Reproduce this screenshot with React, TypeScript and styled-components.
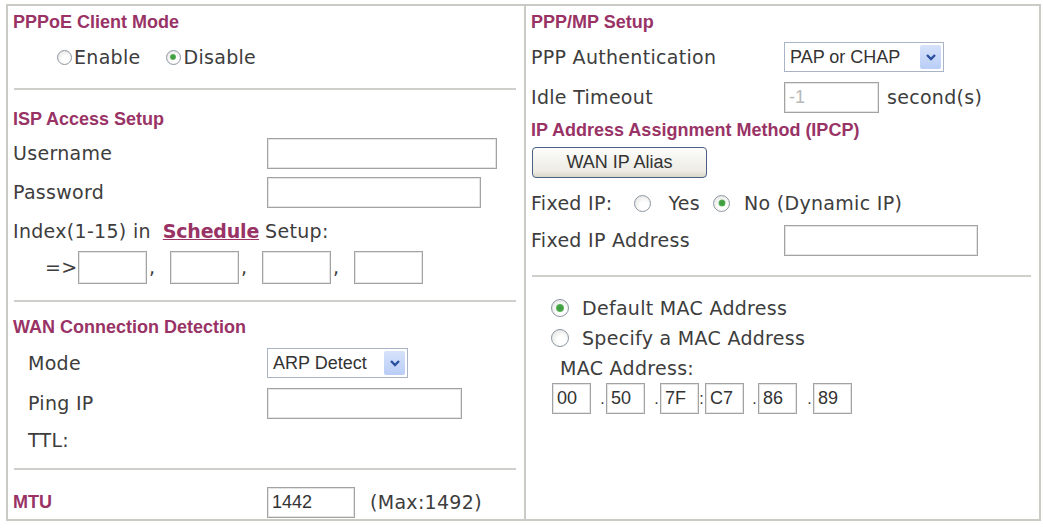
import styled, { createGlobalStyle } from "styled-components";

const GlobalStyle = createGlobalStyle`
  body {
    margin: 0;
    background: #fff;
    font-family: "DejaVu Sans", Verdana, sans-serif;
    font-size: 19px;
    letter-spacing: 0.3px;
    color: #3d3d3d;
  }
  * { box-sizing: border-box; }
`;

const Panel = styled.div`
  display: flex;
  margin: 4px 0 0 6px;
  width: 1035px;
  height: 517px;
  border: 2px solid #cbcbc5;
`;

const Column = styled.div<{ $w: number; $divider?: boolean }>`
  width: ${(p) => p.$w}px;
  display: flex;
  flex-direction: column;
  padding: 0 6px 0 5px;
  border-right: ${(p) => (p.$divider ? "2px solid #cbcbc5" : "none")};
`;

const Section = styled.div<{ $top?: number; $bottom?: number }>`
  display: flex;
  flex-direction: column;
  padding-top: ${(p) => p.$top ?? 0}px;
  padding-bottom: ${(p) => p.$bottom ?? 0}px;
`;

const Divider = styled.div`
  height: 2px;
  margin: 0 2px 0 1px;
  background: #cfcfcb;
`;

const Row = styled.div<{ $h: number; $indent?: number }>`
  display: flex;
  align-items: center;
  height: ${(p) => p.$h}px;
  padding-left: ${(p) => p.$indent ?? 0}px;
  white-space: nowrap;
`;

const Title = styled.div`
  font-family: "Liberation Sans", Arial, sans-serif;
  font-weight: bold;
  font-size: 18px;
  letter-spacing: 0;
  color: #993366;
`;

const Label = styled.span<{ $w?: number; $indent?: number }>`
  display: inline-block;
  width: ${(p) => (p.$w ? `${p.$w}px` : "auto")};
  padding-left: ${(p) => p.$indent ?? 0}px;
  flex-shrink: 0;
`;

const Link = styled.a`
  font-weight: bold;
  letter-spacing: -0.2px;
  color: #993366;
  text-decoration: underline;
  margin: 0 6px 0 12px;
`;

const Input = styled.input<{ $w: number; $h?: number; $muted?: boolean }>`
  width: ${(p) => p.$w}px;
  height: ${(p) => p.$h ?? 31}px;
  border: 1px solid #a3a3a3;
  outline: 1px solid #e4e4e4;
  outline-offset: -2px;
  padding: 0 4px;
  font-family: "Liberation Sans", Arial, sans-serif;
  font-size: 18px;
  letter-spacing: 0;
  color: ${(p) => (p.$muted ? "#b8b8b8" : "#333")};
  background: #fff;
  flex-shrink: 0;
`;

const Select = styled.div<{ $w: number }>`
  display: flex;
  align-items: center;
  justify-content: space-between;
  width: ${(p) => p.$w}px;
  height: 30px;
  border: 1px solid #a8b4c4;
  padding: 0 2px 0 5px;
  font-family: "Liberation Sans", Arial, sans-serif;
  font-size: 18px;
  letter-spacing: 0;
  color: #333;
`;

const SelectArrow = styled.span`
  display: flex;
  align-items: center;
  justify-content: center;
  width: 21px;
  height: 24px;
  background: linear-gradient(#d6e2fb, #b9cdf6);
  border-radius: 2px;
`;

const Button = styled.button`
  width: 175px;
  height: 31px;
  border: 1px solid #4a6184;
  border-radius: 4px;
  background: linear-gradient(#fdfdfb, #ecebe4 80%, #d9d6cb);
  font-family: "Liberation Sans", Arial, sans-serif;
  font-size: 18px;
  color: #333;
  padding: 0;
`;

const RadioDot = styled.span<{ $size: number; $on?: boolean; $gap?: number }>`
  position: relative;
  display: inline-block;
  width: ${(p) => p.$size}px;
  height: ${(p) => p.$size}px;
  border-radius: 50%;
  border: 1.5px solid #8d97a3;
  background: radial-gradient(circle at 60% 65%, #ffffff 30%, #dcdcd8 100%);
  margin-left: ${(p) => p.$gap ?? 0}px;
  flex-shrink: 0;

  &::after {
    content: "";
    display: ${(p) => (p.$on ? "block" : "none")};
    position: absolute;
    left: 50%;
    top: 50%;
    width: ${(p) => Math.round(p.$size * 0.42)}px;
    height: ${(p) => Math.round(p.$size * 0.42)}px;
    transform: translate(-50%, -50%);
    border-radius: 50%;
    background: radial-gradient(circle, #3f9e3f 40%, #8fd08f 100%);
  }
`;

const Text = styled.span<{ $gap: number }>`
  margin-left: ${(p) => p.$gap}px;
`;

const Sep = styled.span<{ $w: number }>`
  display: inline-block;
  width: ${(p) => p.$w}px;
  text-align: right;
  padding-right: 1px;
  font-family: "Liberation Sans", Arial, sans-serif;
  font-size: 16px;
  color: #333;
`;

const Comma = styled.span`
  display: inline-block;
  width: 23px;
  padding-left: 2px;
`;

function Chevron() {
  return (
    <svg width="12" height="10" viewBox="0 0 12 10">
      <polyline points="2,3 6,7 10,3" fill="none" stroke="#2a4f9e" strokeWidth="2.4" />
    </svg>
  );
}

function Dropdown({ value, width }: { value: string; width: number }) {
  return (
    <Select $w={width}>
      <span>{value}</span>
      <SelectArrow>
        <Chevron />
      </SelectArrow>
    </Select>
  );
}

const macParts: { v: string; sep: string; w: number }[] = [
  { v: "00", sep: "", w: 0 },
  { v: "50", sep: ".", w: 15 },
  { v: "7F", sep: ".", w: 15 },
  { v: "C7", sep: ":", w: 6 },
  { v: "86", sep: ".", w: 14 },
  { v: "89", sep: ".", w: 16 },
];

export default function App() {
  return (
    <>
      <GlobalStyle />
      <Panel>
        <Column $w={518} $divider>
          <Section $bottom={12}>
            <Row $h={32}>
              <Title>PPPoE Client Mode</Title>
            </Row>
            <Row $h={38} $indent={44}>
              <RadioDot $size={15} />
              <Text $gap={2}>Enable</Text>
              <RadioDot $size={15} $on $gap={25} />
              <Text $gap={3}>Disable</Text>
            </Row>
          </Section>
          <Divider />
          <Section $top={14} $bottom={16}>
            <Row $h={30}>
              <Title>ISP Access Setup</Title>
            </Row>
            <Row $h={38}>
              <Label $w={254}>Username</Label>
              <Input $w={230} readOnly />
            </Row>
            <Row $h={40}>
              <Label $w={254}>Password</Label>
              <Input $w={214} readOnly />
            </Row>
            <Row $h={38}>
              <Label>
                Index(1-15) in<Link>Schedule</Link>Setup:
              </Label>
            </Row>
            <Row $h={34} $indent={32}>
              <Label $w={33}>=&gt;</Label>
              <Input $w={69} $h={33} readOnly />
              <Comma>,</Comma>
              <Input $w={69} $h={33} readOnly />
              <Comma>,</Comma>
              <Input $w={69} $h={33} readOnly />
              <Comma>,</Comma>
              <Input $w={69} $h={33} readOnly />
            </Row>
          </Section>
          <Divider />
          <Section $top={10} $bottom={10}>
            <Row $h={30}>
              <Title>WAN Connection Detection</Title>
            </Row>
            <Row $h={42}>
              <Label $w={254} $indent={15}>Mode</Label>
              <Dropdown value="ARP Detect" width={141} />
            </Row>
            <Row $h={38}>
              <Label $w={254} $indent={15}>Ping IP</Label>
              <Input $w={195} readOnly />
            </Row>
            <Row $h={36}>
              <Label $indent={15}>TTL:</Label>
            </Row>
          </Section>
          <Divider />
          <Section $top={16}>
            <Row $h={32}>
              <Label $w={254}>
                <Title>MTU</Title>
              </Label>
              <Input $w={88} defaultValue="1442" readOnly />
              <Text $gap={15}>(Max:1492)</Text>
            </Row>
          </Section>
        </Column>

        <Column $w={513}>
          <Section $bottom={19}>
            <Row $h={32}>
              <Title>PPP/MP Setup</Title>
            </Row>
            <Row $h={38}>
              <Label $w={253}>PPP Authentication</Label>
              <Dropdown value="PAP or CHAP" width={160} />
            </Row>
            <Row $h={42}>
              <Label $w={253}>Idle Timeout</Label>
              <Input $w={95} defaultValue="-1" $muted readOnly />
              <Text $gap={8}>second(s)</Text>
            </Row>
            <Row $h={24}>
              <Title>IP Address Assignment Method (IPCP)</Title>
            </Row>
            <Row $h={40} $indent={1}>
              <Button>WAN IP Alias</Button>
            </Row>
            <Row $h={42}>
              <Label>Fixed IP:</Label>
              <RadioDot $size={17} $gap={22} />
              <Text $gap={17}>Yes</Text>
              <RadioDot $size={17} $on $gap={13} />
              <Text $gap={14}>No (Dynamic IP)</Text>
            </Row>
            <Row $h={32}>
              <Label $w={253}>Fixed IP Address</Label>
              <Input $w={194} readOnly />
            </Row>
          </Section>
          <Divider />
          <Section $top={16}>
            <Row $h={30} $indent={20}>
              <RadioDot $size={18} $on />
              <Text $gap={13}>Default MAC Address</Text>
            </Row>
            <Row $h={30} $indent={20}>
              <RadioDot $size={18} />
              <Text $gap={13}>Specify a MAC Address</Text>
            </Row>
            <Row $h={30} $indent={29}>
              <Label>MAC Address:</Label>
            </Row>
            <Row $h={31} $indent={21}>
              {macParts.map((m) => (
                <span key={m.v} style={{ display: "contents" }}>
                  {m.w > 0 && <Sep $w={m.w}>{m.sep}</Sep>}
                  <Input $w={39} defaultValue={m.v} readOnly />
                </span>
              ))}
            </Row>
          </Section>
        </Column>
      </Panel>
    </>
  );
}
